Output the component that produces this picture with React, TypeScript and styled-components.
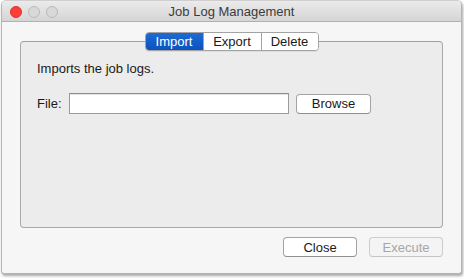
import React from "react";
import styled, { createGlobalStyle } from "styled-components";

const Global = createGlobalStyle`
  html, body { margin: 0; padding: 0; background: #ffffff; }
  body { font-family: "Liberation Sans", Arial, sans-serif; font-size: 13px; color: #1a1a1a; }
`;

const Page = styled.div`
  width: 464px;
  height: 278px;
  padding-left: 1px;
  box-sizing: border-box;
  background: #ffffff;
`;

const Window = styled.div`
  width: 461px;
  height: 274px;
  box-sizing: border-box;
  border: 1px solid #b4b4b4;
  border-top-color: #cfcfcf;
  border-radius: 5px 5px 3px 3px;
  background: #f6f6f6;
  box-shadow: 1px 2px 3px rgba(0, 0, 0, 0.35);
  display: flex;
  flex-direction: column;
  overflow: hidden;
`;

const TitleBar = styled.div`
  height: 20px;
  flex: none;
  position: relative;
  display: flex;
  align-items: center;
  justify-content: center;
  background: linear-gradient(#ebebeb, #d5d5d5);
  border-bottom: 1px solid #b1b1b1;
`;

const Lights = styled.div`
  position: absolute;
  left: 8px;
  top: 5px;
  display: flex;
  gap: 6px;
`;

const Light = styled.span<{ $red?: boolean }>`
  width: 12px;
  height: 12px;
  box-sizing: border-box;
  border-radius: 50%;
  background: ${(p) => (p.$red ? "#fc3e39" : "#d9d9d9")};
  border: 1px solid ${(p) => (p.$red ? "#e0302b" : "#b9b9b9")};
`;

const Title = styled.div`
  font-size: 13px;
  color: #3b3b3b;
  padding-top: 1px;
`;

const Body = styled.div`
  flex: 1;
  display: flex;
  flex-direction: column;
  padding: 10px 18px 0 18px;
`;

const Tabs = styled.div`
  align-self: center;
  display: flex;
  height: 19px;
  position: relative;
  z-index: 1;
  border: 1px solid #a3a3a3;
  border-radius: 4px;
  background: #ffffff;
  box-sizing: border-box;
  overflow: hidden;
  box-shadow: 0 1px 0 rgba(0, 0, 0, 0.06);
`;

const Tab = styled.div<{ $active?: boolean; $w: number }>`
  width: ${(p) => p.$w}px;
  display: flex;
  align-items: center;
  justify-content: center;
  font-size: 13px;
  color: ${(p) => (p.$active ? "#ffffff" : "#1a1a1a")};
  background: ${(p) => (p.$active ? "linear-gradient(#1f6ad3, #0b52bd)" : "#ffffff")};
  & + & {
    border-left: 1px solid #a3a3a3;
  }
`;

const Group = styled.div`
  margin-top: -10px;
  height: 187px;
  box-sizing: border-box;
  border: 1px solid #a9a9a9;
  border-top-color: #a0a0a0;
  border-radius: 4px;
  background: #ececec;
  padding: 19px 16px 0 16px;
  display: flex;
  flex-direction: column;
`;

const Description = styled.div`
  font-size: 13px;
  line-height: 16px;
  color: #1a1a1a;
`;

const FileRow = styled.div`
  margin-top: 16px;
  display: flex;
  align-items: center;
`;

const Label = styled.span`
  font-size: 13px;
  width: 32px;
`;

const Input = styled.div`
  width: 220px;
  height: 21px;
  box-sizing: border-box;
  border: 1px solid #9b9b9b;
  border-top-color: #8c8c8c;
  background: #ffffff;
  box-shadow: inset 0 1px 0 #e4e4e4;
`;

const Button = styled.div<{ $w: number; $disabled?: boolean }>`
  width: ${(p) => p.$w}px;
  height: 20px;
  box-sizing: border-box;
  display: flex;
  align-items: center;
  justify-content: center;
  border: 1px solid ${(p) => (p.$disabled ? "#cdcdcd" : "#a3a3a3")};
  border-bottom-color: ${(p) => (p.$disabled ? "#c4c4c4" : "#8f8f8f")};
  border-radius: 4px;
  background: ${(p) => (p.$disabled ? "#f4f4f4" : "#ffffff")};
  color: ${(p) => (p.$disabled ? "#a6a6a6" : "#1a1a1a")};
  font-size: 13px;
`;

const BrowseButton = styled(Button)`
  margin-left: 7px;
`;

const Footer = styled.div`
  display: flex;
  justify-content: flex-end;
  gap: 12px;
  margin-top: 9px;
`;

export default function App() {
  return (
    <Page>
      <Global />
      <Window>
        <TitleBar>
          <Lights>
            <Light $red />
            <Light />
            <Light />
          </Lights>
          <Title>Job Log Management</Title>
        </TitleBar>
        <Body>
          <Tabs>
            <Tab $active $w={57}>Import</Tab>
            <Tab $w={57}>Export</Tab>
            <Tab $w={56}>Delete</Tab>
          </Tabs>
          <Group>
            <Description>Imports the job logs.</Description>
            <FileRow>
              <Label>File:</Label>
              <Input />
              <BrowseButton $w={75}>Browse</BrowseButton>
            </FileRow>
          </Group>
          <Footer>
            <Button $w={74}>Close</Button>
            <Button $w={74} $disabled>Execute</Button>
          </Footer>
        </Body>
      </Window>
    </Page>
  );
}
